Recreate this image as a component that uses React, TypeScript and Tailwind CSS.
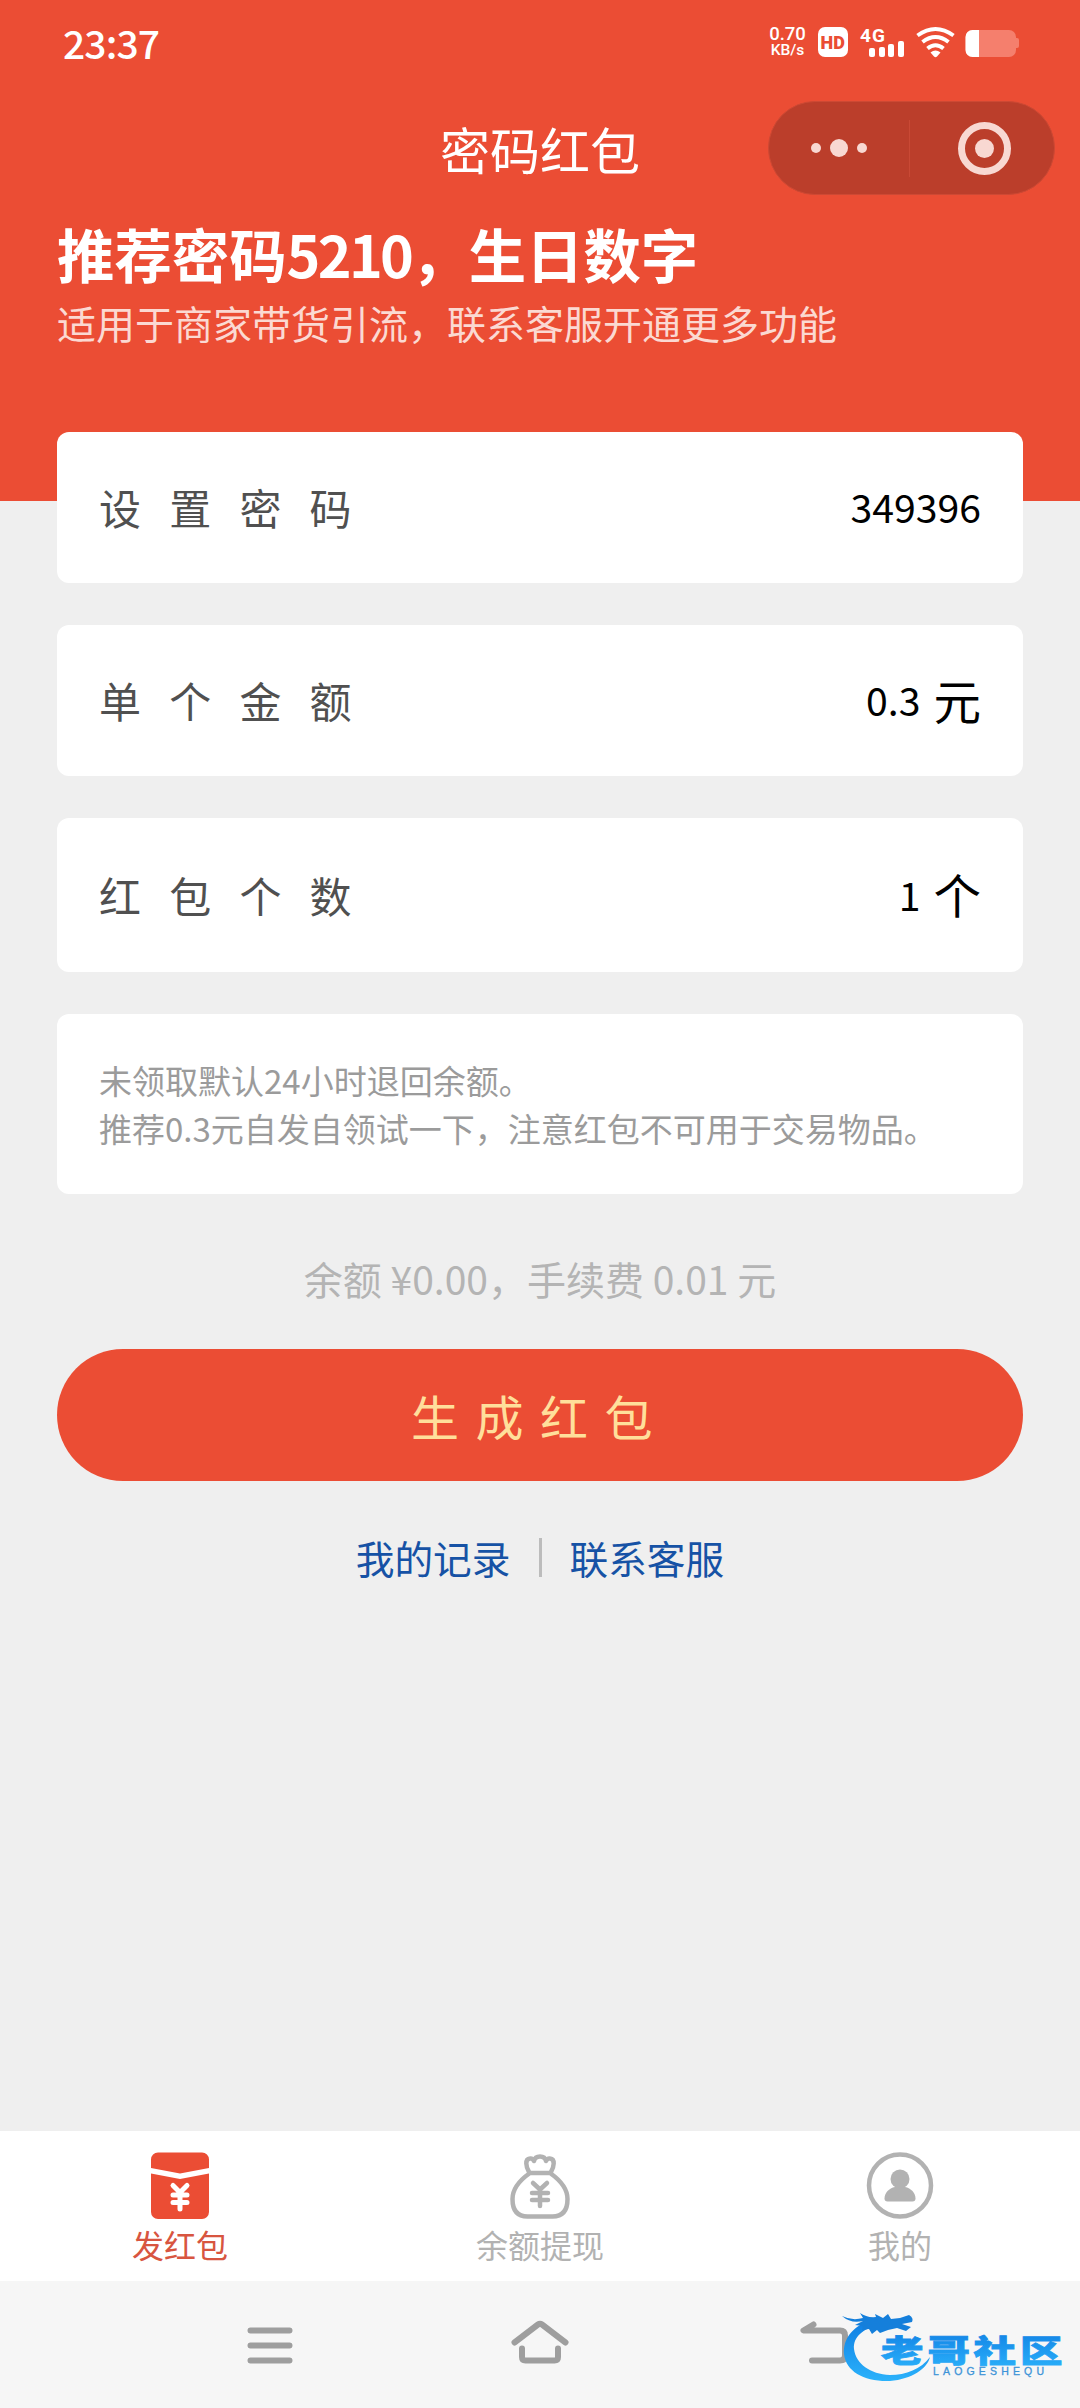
import { FC, ReactNode } from 'react'

interface IField {
  label: string
  value: string
  unit?: string
  height: string
}

const fields: IField[] = [
  { label: '设置密码', value: '349396', height: 'h-[151px]' },
  { label: '单个金额', value: '0.3', unit: '元', height: 'h-[151px]' },
  { label: '红包个数', value: '1', unit: '个', height: 'h-[154px]' },
]

const StatusBar: FC = () => (
  <div className="flex h-[84px] items-center justify-between pl-[63px] pr-[60px] text-white">
    <div className="text-[39px] font-medium leading-[82px] tracking-[-0.9px]">23:37</div>
    <div className="flex items-center">
      <div className="flex w-[37px] flex-col items-center font-[Roboto,sans-serif] font-medium">
        <span className="text-[18.5px] leading-[16px]">0.70</span>
        <span className="text-[15.5px] leading-[16px]">KB/s</span>
      </div>
      <svg className="ml-3 overflow-visible" width="202" height="30" viewBox="0 0 202 30" fill="none">
        <rect width="30" height="30" rx="7" fill="#fff" />
        <text x="2.5" y="21.5" textLength="24.5" fontSize="18" fontWeight="900" fill="#ea4c33" fontFamily="Roboto, sans-serif">
          HD
        </text>
        <text x="42" y="14.5" textLength="25" fontSize="19" fontWeight="700" fill="#fff" fontFamily="Roboto, sans-serif">
          4G
        </text>
        <g fill="#fff">
          <rect x="51" y="21" width="6" height="9" rx="2" />
          <rect x="61" y="20" width="6" height="10" rx="2" />
          <rect x="70" y="17" width="6" height="13" rx="2" />
          <rect x="80" y="14" width="6" height="16" rx="2" />
        </g>
        <g stroke="#fff" strokeWidth="4">
          <path d="M99.500 8.500Q117.500 -4.500 135.500 8.500" />
          <path d="M104.500 15Q117.500 5 130.500 15" />
          <path d="M109.500 21.500Q117.500 15 125.500 21.500" />
        </g>
        <path d="M112.500 25.500Q117.500 21.500 122.500 25.500L119 29.500Q117.500 31 116 29.500Z" fill="#fff" />
        <rect x="147.500" y="3" width="50.500" height="27" rx="7" fill="#f57f6d" />
        <path d="M197 11h2a2 2 0 0 1 2 2v6a2 2 0 0 1-2 2h-2z" fill="#f57f6d" />
        <path d="M154.500 3H161V30H154.500a7 7 0 0 1-7-7V10a7 7 0 0 1 7-7Z" fill="#fff" />
      </svg>
    </div>
  </div>
)

const Capsule: FC = () => (
  <div className="flex h-[94px] w-[287px] items-center rounded-full border border-[#cd4934] bg-[#bb3e2b]">
    <div className="flex flex-1 items-center justify-center gap-[9px]">
      <span className="size-[10px] rounded-full bg-[#f8d8d2]" />
      <span className="size-[18px] rounded-full bg-[#f8d8d2]" />
      <span className="size-[10px] rounded-full bg-[#f8d8d2]" />
    </div>
    <div className="h-[57px] w-px bg-[#c94935]" />
    <div className="flex flex-1 items-center justify-center pl-1">
      <div className="flex size-[53px] items-center justify-center rounded-full border-[7px] border-[#f8d8d2]">
        <span className="size-[19px] rounded-full bg-[#f8d8d2]" />
      </div>
    </div>
  </div>
)

const Header: FC = () => (
  <header className="h-[501px] bg-[#eb4d34] text-white">
    <StatusBar />
    <div className="grid h-[128px] grid-cols-[1fr_auto_1fr] items-center pr-[25px] pl-[25px]">
      <h1 className="col-start-2 text-[50px] leading-[60px]">密码红包</h1>
      <div className="flex justify-end">
        <Capsule />
      </div>
    </div>
    <div className="px-[57px] pt-[6px]">
      <h2 className="text-[57.4px] font-bold leading-[70px]">
        推荐密码<span className="tracking-[-2.7px]">5210</span>，生日数字
      </h2>
      <p className="mt-[5px] text-[39px] leading-[58px] text-[#fbd9d2]">适用于商家带货引流，联系客服开通更多功能</p>
    </div>
  </header>
)

const Field: FC<IField> = ({ label, value, unit, height }) => (
  <div className={`flex items-center justify-between rounded-xl bg-white px-[42px] pb-[2px] ${height}`}>
    <span className="text-[42px] tracking-[28.2px] text-[#505050]">{label}</span>
    <div className="flex items-center text-black">
      <span className="text-[39.2px]">{value}</span>
      {unit && <span className="ml-[13px] text-[47.5px]">{unit}</span>}
    </div>
  </div>
)

const Tab: FC<{ label: string; active?: boolean; children: ReactNode }> = ({ label, active, children }) => (
  <div className={`flex flex-1 flex-col items-center pt-[20px] ${active ? 'text-[#eb4d34]' : 'text-[#b2b2b2]'}`}>
    <svg width="70" height="70" viewBox="0 0 70 70" fill="none">
      {children}
    </svg>
    <span className={`text-[32px] leading-[46px] ${active ? 'text-[#d85540]' : ''}`}>{label}</span>
  </div>
)

const TabBar: FC = () => (
  <nav className="flex h-[150px] bg-white">
    <Tab label="发红包" active>
      <path d="M13 1.500H57a7 7 0 0 1 7 7V17L35 22.500 6 17V8.500a7 7 0 0 1 7-7Z" fill="currentColor" />
      <path d="M6 22.500L35 28 64 22.500V61a7 7 0 0 1-7 7H13a7 7 0 0 1-7-7Z" fill="currentColor" />
      <path d="M28 34.500L35 41.500 42 34.500M28 44H42M28 51.500H42M35 42V58" stroke="#fff" strokeWidth="5" strokeLinecap="round" />
    </Tab>
    <Tab label="余额提现">
      <g stroke="currentColor" strokeWidth="4.500" strokeLinecap="round" strokeLinejoin="round">
        <path d="M25 22C15 29 7.500 37 7.500 48c0 10 4 17.500 15 17.500h25c11 0 15-7.500 15-17.500 0-11-7.500-19-17.500-26Z" />
        <path d="M24 21C21 16 19.500 8 25 7.500q2.500-.5 4 2.500Q30 5.500 35 5.500T41 10q1.500-3 4-2.500C50.500 8 49 16 46 21" />
        <path d="M28 32L35 38.500 42 32M27 42H43M27 49H43M35 40V55" />
      </g>
    </Tab>
    <Tab label="我的">
      <circle cx="35" cy="34.500" r="31" stroke="currentColor" strokeWidth="4.500" />
      <circle cx="35" cy="28" r="9.500" fill="currentColor" />
      <path d="M30 36h10c6 1 10.500 6 10.500 11.500q0 3-3 3h-25q-3 0-3-3C19.500 42 24 37 30 36Z" fill="currentColor" />
    </Tab>
  </nav>
)

const SystemBar: FC = () => (
  <div className="flex h-[127px] items-center bg-[#f6f6f6] px-[135px]">
    <div className="flex w-1/3 justify-center">
      <svg width="60" height="60" viewBox="0 0 60 60" stroke="#9e9e9e" strokeWidth="6" strokeLinecap="round">
        <path d="M10.500 15.500H49.500M10.500 30.500H49.500M10.500 45.500H49.500" />
      </svg>
    </div>
    <div className="flex w-1/3 justify-center">
      <svg width="60" height="60" viewBox="0 0 60 60" fill="none" stroke="#9e9e9e" strokeWidth="6" strokeLinecap="round" strokeLinejoin="round">
        <path d="M4.500 27.500L28 9.500q2-1.500 4 0L55.500 27.500" />
        <path d="M12 33.500V42q0 3.500 3.500 3.500H44.500q3.500 0 3.500-3.500V33.500" />
      </svg>
    </div>
    <div className="flex w-1/3 justify-center pl-[39px]">
      <svg width="60" height="60" viewBox="0 0 60 60" fill="none" stroke="#9e9e9e" strokeWidth="6" strokeLinecap="round" strokeLinejoin="round">
        <path d="M14.500 9.500L4.500 15.500H41q5 0 5 5V40.500q0 5-5 5H13" />
      </svg>
    </div>
  </div>
)

const Watermark: FC = () => (
  <svg className="absolute right-0 bottom-0" width="240" height="100" viewBox="0 0 240 100">
    <defs>
      <linearGradient id="blue" x1="0" y1="0" x2="0" y2="1">
        <stop offset="0" stopColor="#0f7de2" />
        <stop offset="1" stopColor="#2bb2fb" />
      </linearGradient>
    </defs>
    {/* dragon body */}
    <path
      d="M30 12C12 19 3 31 4 46 6 64 25 74 50 73 72 71 87 61 90 49 81 61 66 67 50 67 30 66 16 56 14 41 13 29 23 20 40 17Z"
      fill="url(#blue)"
    />
    {/* dragon head */}
    <path
      d="M2 8Q12 13 23 10L20 5Q27 10 36 9L35 6 43 10 48 6 51 11 60 10 69 7Q74 10 72 14L62 16 71 19 66 23 57 20 48 22 40 25 37 22 32 26 29 21 22 22 23 18 15 17 23 13Q11 16 2 8Z"
      fill="#157fdb"
    />
    <g fontFamily="'Noto Sans CJK SC', sans-serif" fontWeight="900" fill="url(#blue)" stroke="url(#blue)" strokeWidth="0.800">
      <text transform="translate(41 53.500) scale(1.370 1)" x="0 34 67.500 101.500" fontSize="31">
        老哥社区
      </text>
    </g>
    <text x="93" y="67" textLength="111" fontSize="10.500" fontFamily="'Liberation Sans', sans-serif" fill="#3d94d8" stroke="#3d94d8" strokeWidth="0.300">
      LAOGESHEQU
    </text>
  </svg>
)

export default function App() {
  return (
    <div className="relative flex h-[2408px] w-[1080px] flex-col overflow-hidden bg-[#efefef] font-['Noto_Sans_CJK_SC',sans-serif]">
      <Header />
      <main className="-mt-[69px] flex-1 px-[57px]">
        <div className="flex flex-col gap-[42px]">
          {fields.map((field) => (
            <Field key={field.label} {...field} />
          ))}
          <div className="h-[180px] rounded-xl bg-white px-[42px] py-[42px] text-[33px] leading-[48px] text-[#9b9b9b]">
            <p>未领取默认24小时退回余额。</p>
            <p>推荐0.3元自发自领试一下，注意红包不可用于交易物品。</p>
          </div>
        </div>
        <p className="mt-[55px] text-center text-[39px] leading-[58px] text-[#b4b4b4]">余额 ¥0.00，手续费 0.01 元</p>
        <button className="mt-[42px] h-[132px] w-full rounded-full bg-[#eb4d34] text-[48px] tracking-[16.5px] text-[#ffdf9b]">
          生成红包
        </button>
        <div className="mt-[47px] flex items-center justify-center gap-[28px] text-[38.7px] leading-[58px] text-[#1652a5]">
          <a>我的记录</a>
          <span className="h-[39px] w-[3px] bg-[#bcbcbc]" />
          <a>联系客服</a>
        </div>
      </main>
      <TabBar />
      <SystemBar />
      <Watermark />
    </div>
  )
}
